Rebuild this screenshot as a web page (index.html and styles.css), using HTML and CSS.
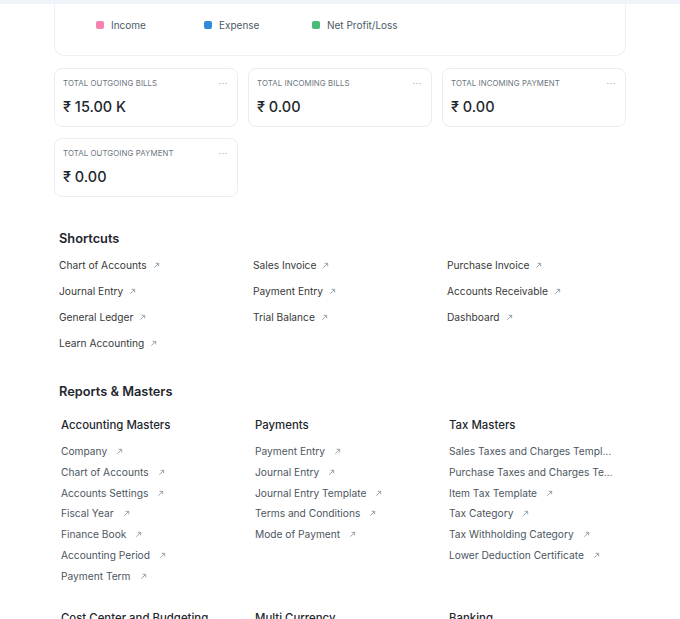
FILE: index.html
```html
<!DOCTYPE html>
<html lang="en">
<head>
    <meta charset="UTF-8">
    <title>Accounting</title>
    <link rel="stylesheet" href="styles.css">
</head>
<body>
    <div class="topbar"></div>

    <div class="page">
        <!-- chart card, top part scrolled away -->
        <div class="chart-card">
            <div class="legend">
                <div class="legend-item"><span class="swatch pink"></span>Income</div>
                <div class="legend-item"><span class="swatch blue"></span>Expense</div>
                <div class="legend-item"><span class="swatch green"></span>Net Profit/Loss</div>
            </div>
        </div>

        <div class="number-cards">
            <div class="number-card">
                <div class="nc-head"><span class="nc-label">Total Outgoing Bills</span><svg class="dots" viewBox="0 0 9 3"><circle cx="1" cy="1.5" r="0.7"/><circle cx="4.5" cy="1.5" r="0.7"/><circle cx="8" cy="1.5" r="0.7"/></svg></div>
                <div class="nc-value">₹ 15.00 K</div>
            </div>
            <div class="number-card">
                <div class="nc-head"><span class="nc-label">Total Incoming Bills</span><svg class="dots" viewBox="0 0 9 3"><circle cx="1" cy="1.5" r="0.7"/><circle cx="4.5" cy="1.5" r="0.7"/><circle cx="8" cy="1.5" r="0.7"/></svg></div>
                <div class="nc-value">₹ 0.00</div>
            </div>
            <div class="number-card">
                <div class="nc-head"><span class="nc-label">Total Incoming Payment</span><svg class="dots" viewBox="0 0 9 3"><circle cx="1" cy="1.5" r="0.7"/><circle cx="4.5" cy="1.5" r="0.7"/><circle cx="8" cy="1.5" r="0.7"/></svg></div>
                <div class="nc-value">₹ 0.00</div>
            </div>
            <div class="number-card">
                <div class="nc-head"><span class="nc-label">Total Outgoing Payment</span><svg class="dots" viewBox="0 0 9 3"><circle cx="1" cy="1.5" r="0.7"/><circle cx="4.5" cy="1.5" r="0.7"/><circle cx="8" cy="1.5" r="0.7"/></svg></div>
                <div class="nc-value">₹ 0.00</div>
            </div>
        </div>

        <h2 class="section-title shortcuts-title">Shortcuts</h2>
        <div class="shortcuts">
            <a class="link">Chart of Accounts<svg class="arrow" viewBox="0 0 8 8"><path d="M1.5 6.5L6.5 1.5M3 1.5h3.5V5"/></svg></a>
            <a class="link">Sales Invoice<svg class="arrow" viewBox="0 0 8 8"><path d="M1.5 6.5L6.5 1.5M3 1.5h3.5V5"/></svg></a>
            <a class="link">Purchase Invoice<svg class="arrow" viewBox="0 0 8 8"><path d="M1.5 6.5L6.5 1.5M3 1.5h3.5V5"/></svg></a>
            <a class="link">Journal Entry<svg class="arrow" viewBox="0 0 8 8"><path d="M1.5 6.5L6.5 1.5M3 1.5h3.5V5"/></svg></a>
            <a class="link">Payment Entry<svg class="arrow" viewBox="0 0 8 8"><path d="M1.5 6.5L6.5 1.5M3 1.5h3.5V5"/></svg></a>
            <a class="link">Accounts Receivable<svg class="arrow" viewBox="0 0 8 8"><path d="M1.5 6.5L6.5 1.5M3 1.5h3.5V5"/></svg></a>
            <a class="link">General Ledger<svg class="arrow" viewBox="0 0 8 8"><path d="M1.5 6.5L6.5 1.5M3 1.5h3.5V5"/></svg></a>
            <a class="link">Trial Balance<svg class="arrow" viewBox="0 0 8 8"><path d="M1.5 6.5L6.5 1.5M3 1.5h3.5V5"/></svg></a>
            <a class="link">Dashboard<svg class="arrow" viewBox="0 0 8 8"><path d="M1.5 6.5L6.5 1.5M3 1.5h3.5V5"/></svg></a>
            <a class="link">Learn Accounting<svg class="arrow" viewBox="0 0 8 8"><path d="M1.5 6.5L6.5 1.5M3 1.5h3.5V5"/></svg></a>
        </div>

        <h2 class="section-title reports-title">Reports &amp; Masters</h2>
        <div class="reports">
            <div class="report-card">
                <h3 class="card-title">Accounting Masters</h3>
                <a class="rlink">Company<svg class="arrow" viewBox="0 0 8 8"><path d="M1.5 6.5L6.5 1.5M3 1.5h3.5V5"/></svg></a>
                <a class="rlink">Chart of Accounts<svg class="arrow" viewBox="0 0 8 8"><path d="M1.5 6.5L6.5 1.5M3 1.5h3.5V5"/></svg></a>
                <a class="rlink">Accounts Settings<svg class="arrow" viewBox="0 0 8 8"><path d="M1.5 6.5L6.5 1.5M3 1.5h3.5V5"/></svg></a>
                <a class="rlink">Fiscal Year<svg class="arrow" viewBox="0 0 8 8"><path d="M1.5 6.5L6.5 1.5M3 1.5h3.5V5"/></svg></a>
                <a class="rlink">Finance Book<svg class="arrow" viewBox="0 0 8 8"><path d="M1.5 6.5L6.5 1.5M3 1.5h3.5V5"/></svg></a>
                <a class="rlink">Accounting Period<svg class="arrow" viewBox="0 0 8 8"><path d="M1.5 6.5L6.5 1.5M3 1.5h3.5V5"/></svg></a>
                <a class="rlink">Payment Term<svg class="arrow" viewBox="0 0 8 8"><path d="M1.5 6.5L6.5 1.5M3 1.5h3.5V5"/></svg></a>
            </div>
            <div class="report-card">
                <h3 class="card-title">Payments</h3>
                <a class="rlink">Payment Entry<svg class="arrow" viewBox="0 0 8 8"><path d="M1.5 6.5L6.5 1.5M3 1.5h3.5V5"/></svg></a>
                <a class="rlink">Journal Entry<svg class="arrow" viewBox="0 0 8 8"><path d="M1.5 6.5L6.5 1.5M3 1.5h3.5V5"/></svg></a>
                <a class="rlink">Journal Entry Template<svg class="arrow" viewBox="0 0 8 8"><path d="M1.5 6.5L6.5 1.5M3 1.5h3.5V5"/></svg></a>
                <a class="rlink">Terms and Conditions<svg class="arrow" viewBox="0 0 8 8"><path d="M1.5 6.5L6.5 1.5M3 1.5h3.5V5"/></svg></a>
                <a class="rlink">Mode of Payment<svg class="arrow" viewBox="0 0 8 8"><path d="M1.5 6.5L6.5 1.5M3 1.5h3.5V5"/></svg></a>
            </div>
            <div class="report-card">
                <h3 class="card-title">Tax Masters</h3>
                <a class="rlink">Sales Taxes and Charges Template<svg class="arrow" viewBox="0 0 8 8"><path d="M1.5 6.5L6.5 1.5M3 1.5h3.5V5"/></svg></a>
                <a class="rlink">Purchase Taxes and Charges Template<svg class="arrow" viewBox="0 0 8 8"><path d="M1.5 6.5L6.5 1.5M3 1.5h3.5V5"/></svg></a>
                <a class="rlink">Item Tax Template<svg class="arrow" viewBox="0 0 8 8"><path d="M1.5 6.5L6.5 1.5M3 1.5h3.5V5"/></svg></a>
                <a class="rlink">Tax Category<svg class="arrow" viewBox="0 0 8 8"><path d="M1.5 6.5L6.5 1.5M3 1.5h3.5V5"/></svg></a>
                <a class="rlink">Tax Withholding Category<svg class="arrow" viewBox="0 0 8 8"><path d="M1.5 6.5L6.5 1.5M3 1.5h3.5V5"/></svg></a>
                <a class="rlink">Lower Deduction Certificate<svg class="arrow" viewBox="0 0 8 8"><path d="M1.5 6.5L6.5 1.5M3 1.5h3.5V5"/></svg></a>
            </div>
            <div class="report-card">
                <h3 class="card-title">Cost Center and Budgeting</h3>
            </div>
            <div class="report-card">
                <h3 class="card-title">Multi Currency</h3>
            </div>
            <div class="report-card">
                <h3 class="card-title">Banking</h3>
            </div>
        </div>
    </div>
</body>
</html>
```

FILE: styles.css
```css
body {
    margin: 0;
    background: #ffffff;
    font-family: Inter, "Noto Sans", sans-serif;
    color: #383838;
    overflow: hidden;
}

.topbar {
    height: 4px;
    background: #eef4fa;
}

.page {
    width: 572px;
    margin-left: 54px;
}

/* chart card (only the legend is visible) */
.chart-card {
    height: 52px;
    border: 1px solid #edeef0;
    border-top: none;
    border-radius: 0 0 10px 10px;
    box-sizing: border-box;
}

.legend {
    display: flex;
    padding: 15px 0 0 41px;
}

.legend-item {
    display: flex;
    align-items: center;
    width: 108px;
    font-size: 10px;
    color: #4c5a67;
}

.swatch {
    width: 8px;
    height: 8px;
    border-radius: 2px;
    margin-right: 7px;
}

.pink { background: #f683ae; }
.blue { background: #318ad8; }
.green { background: #48bb74; }

/* number cards */
.number-cards {
    display: grid;
    grid-template-columns: repeat(3, 1fr);
    gap: 11px 10px;
    margin-top: 12px;
}

.number-card {
    height: 59px;
    border: 1px solid #ebedf0;
    border-radius: 8px;
    box-sizing: border-box;
    padding: 8px 8px 0 8px;
}

.nc-head {
    display: flex;
    justify-content: space-between;
    align-items: center;
    height: 12px;
}

.nc-label {
    font-size: 7.8px;
    text-transform: uppercase;
    color: #6c7680;
    letter-spacing: 0.1px;
}

.dots {
    width: 8px;
    height: 3px;
    margin-right: 2px;
    fill: #8d99a6;
}

.nc-value {
    margin-top: 9px;
    font-size: 14.5px;
    font-weight: 500;
    color: #1f272e;
}

/* section titles */
.section-title {
    font-size: 12.8px;
    font-weight: 600;
    color: #1f272e;
    margin: 0;
    padding-left: 5px;
}

.shortcuts-title {
    margin-top: 34px;
}

.shortcuts {
    display: grid;
    grid-template-columns: repeat(3, 174px);
    column-gap: 20px;
    padding-left: 5px;
    margin-top: 6px;
}

.link {
    display: flex;
    align-items: center;
    height: 26px;
    font-size: 10.2px;
    color: #383838;
}

.arrow {
    width: 7px;
    height: 7px;
    margin-left: 6px;
    fill: none;
    stroke: #8d99a6;
    stroke-width: 1;
}

.reports-title {
    margin-top: 28px;
}

.reports {
    display: grid;
    grid-template-columns: repeat(3, 164px);
    column-gap: 30px;
    padding-left: 7px;
    margin-top: 19px;
}

.report-card {
    min-width: 0;
    padding-bottom: 24px;
}

.card-title {
    font-size: 11.4px;
    font-weight: 500;
    color: #1f272e;
    margin: 0 0 9px 0;
    line-height: 14px;
    white-space: nowrap;
}

.rlink {
    display: block;
    height: 20.8px;
    line-height: 20.8px;
    font-size: 10.2px;
    color: #4c5561;
    white-space: nowrap;
    overflow: hidden;
    text-overflow: ellipsis;
}

.rlink .arrow {
    margin-left: 9px;
    vertical-align: 0;
}
```
